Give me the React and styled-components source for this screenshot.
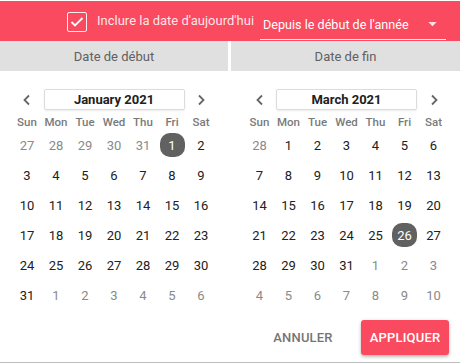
import React from "react";
import styled, { createGlobalStyle } from "styled-components";

const Global = createGlobalStyle`
  body {
    margin: 0;
    background: #fff;
    font-family: Roboto, "Noto Sans", sans-serif;
  }
`;

const RED = "#f94a5f";

const Wrapper = styled.div`
  width: 460px;
  height: 362px;
  border-bottom: 1px solid #bdbdbd;
  display: flex;
  flex-direction: column;
`;

const TopBar = styled.div`
  height: 40px;
  margin-top: 1px;
  background: ${RED};
  display: flex;
  align-items: center;
  padding-left: 67px;
  box-sizing: border-box;
`;

const CheckBox = styled.span`
  width: 20px;
  height: 20px;
  box-sizing: border-box;
  border: 1.5px solid rgba(255, 255, 255, 0.9);
  border-radius: 2px;
  display: flex;
  align-items: center;
  justify-content: center;
  margin-top: 1px;
`;

const CheckLabel = styled.span`
  margin-left: 10px;
  color: rgba(255, 255, 255, 0.88);
  font-size: 13px;
  white-space: nowrap;
  margin-top: -1px;
`;

const Select = styled.div`
  margin-left: 6px;
  width: 186px;
  height: 28px;
  margin-top: 9px;
  box-sizing: border-box;
  border-bottom: 1.5px solid rgba(255, 255, 255, 0.92);
  display: flex;
  align-items: center;
  justify-content: space-between;
  padding: 0 9px 2px 3px;
  color: #fff;
  font-size: 12.6px;
  white-space: nowrap;
`;

const Columns = styled.div`
  display: grid;
  grid-template-columns: 228px 229px;
  column-gap: 3px;
`;

const Tab = styled.div`
  height: 30px;
  background: #e0e0e0;
  color: #616161;
  font-size: 13px;
  display: flex;
  align-items: center;
  justify-content: center;
`;

const Panel = styled.div`
  display: flex;
  justify-content: center;
  padding-top: 18px;
  padding-left: ${(p) => p.$shift || 0}px;
`;

const Grid = styled.div`
  display: grid;
  grid-template-columns: repeat(7, 29px);
`;

const MonthRow = styled.div`
  grid-column: 1 / -1;
  display: grid;
  grid-template-columns: repeat(7, 29px);
  height: 21px;
  margin-bottom: 4px;
  align-items: center;
`;

const Arrow = styled.span`
  display: flex;
  justify-content: center;
  align-items: center;
`;

const MonthBox = styled.div`
  grid-column: 2 / 7;
  margin: 0 2px;
  height: 21px;
  box-sizing: border-box;
  border: 1px solid #dcdcdc;
  border-radius: 2px;
  box-shadow: 0 1px 2px rgba(0, 0, 0, 0.08);
  display: flex;
  align-items: center;
  justify-content: center;
  font-size: 13px;
  font-weight: 700;
  color: #212121;
`;

const WeekDay = styled.div`
  height: 16px;
  display: flex;
  align-items: center;
  justify-content: center;
  font-size: 11.5px;
  font-weight: 500;
  color: #7a7a7a;
`;

const Cell = styled.div`
  height: 30px;
  display: flex;
  align-items: center;
  justify-content: center;
`;

const Day = styled.span`
  width: 25px;
  height: 24px;
  border-radius: 10px;
  display: flex;
  align-items: center;
  justify-content: center;
  font-size: 13px;
  color: ${(p) => (p.$selected ? "#fff" : p.$muted ? "#8a8a8a" : "#212121")};
  background: ${(p) => (p.$selected ? "#616161" : "transparent")};
`;

const Footer = styled.div`
  display: flex;
  justify-content: flex-end;
  gap: 14px;
  padding: 10px 11px 0 0;
`;

const Button = styled.button`
  height: 35px;
  width: 88px;
  padding: 0;
  border: none;
  border-radius: 3px;
  font-family: Roboto, sans-serif;
  font-size: 13px;
  font-weight: 500;
  letter-spacing: 0.2px;
  text-transform: uppercase;
  background: ${(p) => (p.$primary ? RED : "transparent")};
  color: ${(p) => (p.$primary ? "#fff" : "#757575")};
  box-shadow: ${(p) =>
    p.$primary ? "0 2px 3px rgba(0,0,0,0.2), 0 1px 5px rgba(0,0,0,0.1)" : "none"};
`;

const weekDays = ["Sun", "Mon", "Tue", "Wed", "Thu", "Fri", "Sat"];

const buildDays = (startPrev, prevLen, length, selected) => {
  const days = [];
  for (let d = startPrev; d <= prevLen; d++) days.push({ n: d, muted: true });
  for (let d = 1; d <= length; d++) days.push({ n: d, selected: d === selected });
  let n = 1;
  while (days.length < 42) days.push({ n: n++, muted: true });
  return days;
};

const Chevron = ({ dir }) => (
  <svg width="10" height="12" viewBox="0 0 10 12">
    <path
      d={dir === "left" ? "M7 1.5 L2.5 6 L7 10.5" : "M3 1.5 L7.5 6 L3 10.5"}
      fill="none"
      stroke="#666"
      strokeWidth="1.8"
    />
  </svg>
);

const Calendar = ({ title, days, shift }) => (
  <Panel $shift={shift}>
    <Grid>
      <MonthRow>
        <Arrow>
          <Chevron dir="left" />
        </Arrow>
        <MonthBox>{title}</MonthBox>
        <Arrow>
          <Chevron dir="right" />
        </Arrow>
      </MonthRow>
      {weekDays.map((w) => (
        <WeekDay key={w}>{w}</WeekDay>
      ))}
      {days.map((d, i) => (
        <Cell key={i}>
          <Day $muted={d.muted} $selected={d.selected}>
            {d.n}
          </Day>
        </Cell>
      ))}
    </Grid>
  </Panel>
);

const App = () => {
  const january = buildDays(27, 31, 31, 1);
  const march = buildDays(28, 28, 31, 26);

  return (
    <Wrapper>
      <Global />
      <TopBar>
        <CheckBox>
          <svg width="14" height="12" viewBox="0 0 14 12">
            <path d="M1.5 6 L5 9.5 L12.5 2" fill="none" stroke="#fff" strokeWidth="1.8" />
          </svg>
        </CheckBox>
        <CheckLabel>Inclure la date d'aujourd'hui</CheckLabel>
        <Select>
          <span>Depuis le début de l'année</span>
          <svg width="9" height="5" viewBox="0 0 10 6">
            <path d="M0 0 L10 0 L5 5 Z" fill="rgba(255,255,255,0.85)" />
          </svg>
        </Select>
      </TopBar>
      <Columns>
        <Tab>Date de début</Tab>
        <Tab>Date de fin</Tab>
        <Calendar title="January 2021" days={january} shift={-3} />
        <Calendar title="March 2021" days={march} shift={2} />
      </Columns>
      <Footer>
        <Button>Annuler</Button>
        <Button $primary>Appliquer</Button>
      </Footer>
    </Wrapper>
  );
};

export default App;
